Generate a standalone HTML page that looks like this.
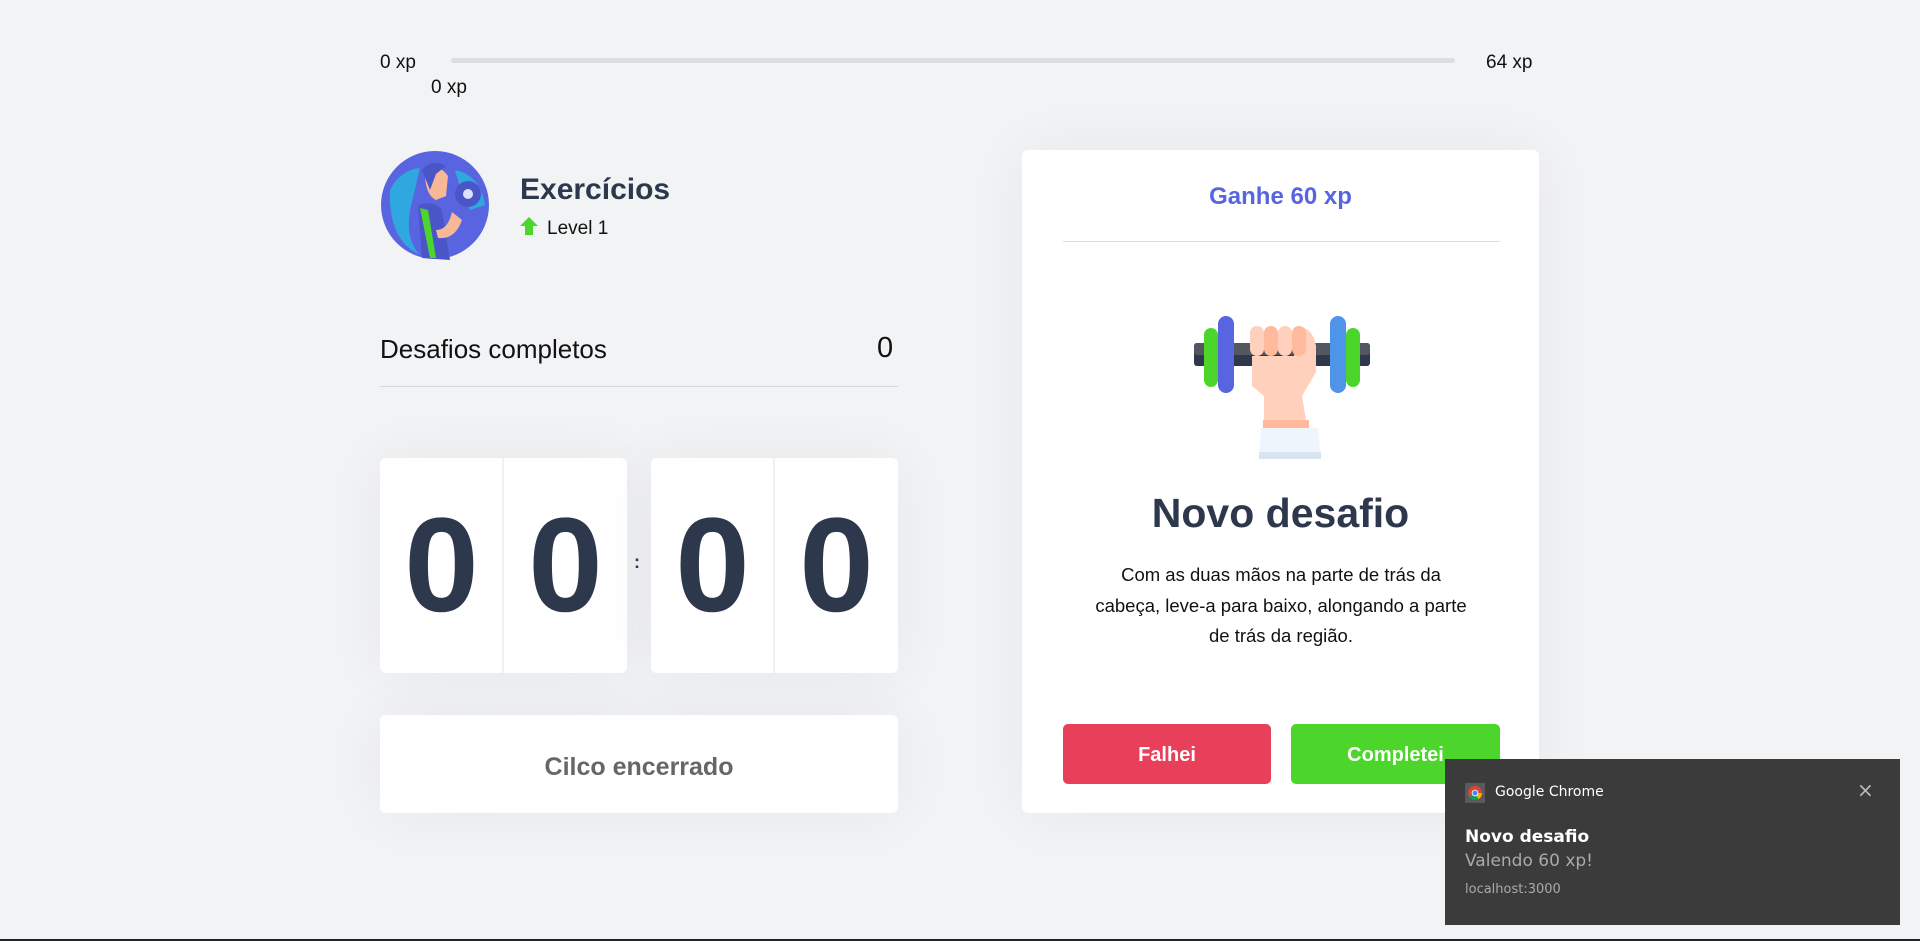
<!DOCTYPE html>
<html><head><meta charset="utf-8"><style>
*{margin:0;padding:0;box-sizing:border-box}
body{width:1920px;height:941px;background:#F2F3F5;font-family:"Liberation Sans",sans-serif;color:#2E384D;position:relative;overflow:hidden}
.a{position:absolute}
.xp{font-size:19px;color:#111}
.box{background:#fff;border-radius:6px;box-shadow:0 0 60px rgba(0,0,0,0.05)}
.dig{position:absolute;top:0;height:215px;width:123px;text-align:center;font-weight:bold;font-size:134px;line-height:215px;color:#2E384D}
</style></head><body>
<div class="a xp" style="left:380px;top:52px">0 xp</div>
<div class="a" style="left:451px;top:58px;width:1004px;height:5px;border-radius:3px;background:#DCDDE0"></div>
<div class="a xp" style="left:1486px;top:52px">64 xp</div>
<div class="a xp" style="left:431px;top:77px">0 xp</div>

<svg class="a" style="left:380px;top:150px" width="110" height="110" viewBox="0 0 110 110">
<circle cx="55" cy="55" r="54" fill="#5965E0"/>
<path d="M10 40 Q20 20 40 18 L30 60 Q25 90 40 105 Q8 90 10 40Z" fill="#2FA8E0"/>
<path d="M75 20 Q100 25 105 55 L90 60 Q80 40 75 20Z" fill="#2FA8E0"/>
<path d="M38 55 Q55 50 62 60 L70 110 L42 108Z" fill="#4A56C8"/>
<path d="M40 58 L48 60 L56 108 L50 108Z" fill="#4CD62B"/>
<path d="M45 22 Q58 12 68 26 L66 46 L56 50 Q45 45 45 22Z" fill="#F7B898"/>
<path d="M42 20 Q52 8 66 16 L56 24 L50 40 Z" fill="#4A56C8"/>
<path d="M58 88 Q75 90 82 70 L72 62 Q68 80 56 80Z" fill="#F7B898"/>
<circle cx="88" cy="44" r="13" fill="#4A56C8"/><circle cx="88" cy="44" r="5" fill="#DDE3FF"/>
</svg>
<div class="a" style="left:520px;top:173px;font-size:30px;font-weight:bold;color:#2E384D">Exercícios</div>
<svg class="a" style="left:519px;top:216px" width="20" height="20" viewBox="0 0 20 20"><path d="M10 1 L19 10 L14 10 L14 19 L6 19 L6 10 L1 10Z" fill="#4CD62B"/></svg>
<div class="a" style="left:547px;top:218px;font-size:19px;color:#111">Level 1</div>

<div class="a" style="left:380px;top:334px;font-size:26px;color:#111">Desafios completos</div>
<div class="a" style="left:877px;top:332px;font-size:29px;color:#111">0</div>
<div class="a" style="left:380px;top:386px;width:518px;height:1px;background:#D7D8DA"></div>

<div class="a box" style="left:380px;top:458px;width:247px;height:215px">
<div class="dig" style="left:0">0</div><div class="a" style="left:122px;top:0;width:2px;height:215px;background:#F0F1F3"></div><div class="dig" style="left:124px">0</div></div>
<div class="a" style="left:634px;top:552px;font-size:18px;font-weight:bold">:</div>
<div class="a box" style="left:651px;top:458px;width:247px;height:215px">
<div class="dig" style="left:0">0</div><div class="a" style="left:122px;top:0;width:2px;height:215px;background:#F0F1F3"></div><div class="dig" style="left:124px">0</div></div>

<div class="a box" style="left:380px;top:715px;width:518px;height:98px;text-align:center;line-height:104px;font-size:25px;font-weight:bold;color:#666">Cilco encerrado</div>

<div class="a box" style="left:1022px;top:150px;width:517px;height:663px">
<div class="a" style="left:0;top:33px;width:517px;text-align:center;font-size:24px;font-weight:bold;color:#5965E0">Ganhe 60 xp</div>
<div class="a" style="left:41px;top:91px;width:437px;height:1px;background:#DCDDE0"></div>
<svg class="a" style="left:172px;top:166px" width="176" height="144" viewBox="0 0 176 144">
<rect x="0" y="27" width="176" height="23" rx="3" fill="#2E384D"/><rect x="0" y="27" width="176" height="12" rx="3" fill="#53575F"/>
<rect x="10" y="12" width="14" height="59" rx="7" fill="#4CD62B"/>
<rect x="24" y="0" width="16" height="77" rx="8" fill="#5965E0"/>
<rect x="136" y="0" width="16" height="77" rx="8" fill="#4E94E8"/>
<rect x="152" y="12" width="14" height="59" rx="7" fill="#4CD62B"/>
<path d="M58 55 L58 70 L70 80 L70 104 L112 104 L108 80 L122 56 L122 30 Q118 10 105 12 L100 40 L58 40Z" fill="#FFD1BD"/>
<rect x="56" y="10" width="14" height="30" rx="7" fill="#FFD1BD"/>
<rect x="70" y="10" width="14" height="30" rx="7" fill="#FFB99C"/>
<rect x="84" y="10" width="14" height="30" rx="7" fill="#FFD1BD"/>
<rect x="98" y="10" width="14" height="30" rx="7" fill="#FFB99C"/>
<rect x="69" y="104" width="46" height="8" fill="#FFB99C"/>
<path d="M67 112 L124 112 L127 143 L65 143Z" fill="#EEF5FC"/><rect x="65" y="136" width="62" height="7" fill="#D8E4EF"/>
</svg>
<div class="a" style="left:0;top:340px;width:517px;text-align:center;font-size:41px;font-weight:bold;color:#2E384D">Novo desafio</div>
<div class="a" style="left:69px;top:410px;width:380px;text-align:center;font-size:18.5px;line-height:30.5px;color:#111">Com as duas mãos na parte de trás da cabeça, leve-a para baixo, alongando a parte de trás da região.</div>
<div class="a" style="left:41px;top:574px;width:208px;height:60px;border-radius:5px;background:#E83F5B;color:#fff;font-weight:bold;font-size:20px;text-align:center;line-height:62px">Falhei</div>
<div class="a" style="left:269px;top:574px;width:209px;height:60px;border-radius:5px;background:#4CD62B;color:#fff;font-weight:bold;font-size:20px;text-align:center;line-height:62px">Completei</div>
</div>

<div class="a" style="left:1445px;top:759px;width:455px;height:166px;background:#3B3B3B;font-family:'DejaVu Sans','Liberation Sans',sans-serif">
<svg class="a" style="left:20px;top:24px" width="20" height="20" viewBox="0 0 20 20"><rect width="20" height="20" fill="#5A5A5A"/><circle cx="10" cy="10" r="7" fill="#DB4437"/><path d="M10 10 L3.9 13.5 A7 7 0 0 0 13.5 16.1Z" fill="#0F9D58"/><path d="M10 10 L13.5 16.1 A7 7 0 0 0 17 10Z" fill="#F4B400"/><circle cx="10" cy="10" r="3.3" fill="#fff"/><circle cx="10" cy="10" r="2.5" fill="#4285F4"/></svg>
<div class="a" style="left:50px;top:25px;font-size:14px;color:#fff">Google Chrome</div>
<div class="a" style="left:412px;top:19px;font-size:20px;color:#bbb">×</div>
<div class="a" style="left:20px;top:68px;font-size:17px;font-weight:bold;color:#fff">Novo desafio</div>
<div class="a" style="left:20px;top:92px;font-size:17px;color:#aaa">Valendo 60 xp!</div>
<div class="a" style="left:20px;top:123px;font-size:13px;color:#aaa">localhost:3000</div>
</div>
<div class="a" style="left:0;top:939px;width:1920px;height:2px;background:#222"></div>
</body></html>
